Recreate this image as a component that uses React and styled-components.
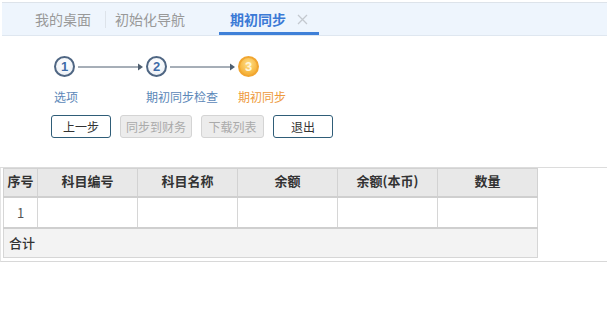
import React from 'react';
import styled, { createGlobalStyle } from 'styled-components';

const GlobalStyle = createGlobalStyle`
	body {
		margin: 0;
		background: #fff;
		font-family: 'Noto Sans CJK SC', 'Noto Sans', sans-serif;
		color: #333;
	}
`;

const tabs = [
	{ title: '我的桌面', pad: '0 15px 0 33px', sep: true },
	{ title: '初始化导航', pad: '0 34px 0 9px' },
	{ title: '期初同步', pad: '0 11px 0 11px', active: true },
];

const steps = [
	{ no: 1, label: '选项' },
	{ no: 2, label: '期初同步检查' },
	{ no: 3, label: '期初同步', current: true },
];

const buttons = [
	{ text: '上一步', width: 60 },
	{ text: '同步到财务', width: 72, disabled: true },
	{ text: '下载列表', width: 63, disabled: true },
	{ text: '退出', width: 60 },
];

const columns = [
	{ title: '序号', width: 34 },
	{ title: '科目编号', width: 100 },
	{ title: '科目名称', width: 100 },
	{ title: '余额', width: 100 },
	{ title: '余额(本币)', width: 100 },
	{ title: '数量', width: 100 },
];

const App = () => {
	return (
		<Page>
			<GlobalStyle />
			<TabBar>
				{tabs.map((tab) => (
					<Tab key={tab.title} pad={tab.pad} active={tab.active} sep={tab.sep}>
						<span>{tab.title}</span>
						{tab.active && (
							<svg width="11" height="11" viewBox="0 0 11 11">
								<path d="M1 1 L10 10 M10 1 L1 10" stroke="#c4c9cf" strokeWidth="1.3" />
							</svg>
						)}
					</Tab>
				))}
			</TabBar>

			<Wizard>
				<Steps>
					{steps.map((step, index) => (
						<Step key={step.no}>
							<StepHead>
								<Circle current={step.current}>{step.no}</Circle>
								{index !== steps.length - 1 && (
									<svg width="71" height="10" viewBox="0 0 71 10">
										<line x1="3" y1="5" x2="64" y2="5" stroke="#4f5f70" strokeWidth="1" />
										<path d="M63 1.5 L68 5 L63 8.5 Z" fill="#4f5f70" />
									</svg>
								)}
							</StepHead>
							<StepLabel current={step.current}>{step.label}</StepLabel>
						</Step>
					))}
				</Steps>
				<Actions>
					{buttons.map((btn) => (
						<Button key={btn.text} width={btn.width} disabled={btn.disabled}>
							{btn.text}
						</Button>
					))}
				</Actions>
			</Wizard>

			<GridArea>
				<Table>
					<colgroup>
						{columns.map((col) => (
							<col key={col.title} style={{ width: col.width }} />
						))}
					</colgroup>
					<thead>
						<tr>
							{columns.map((col) => (
								<Th key={col.title}>{col.title}</Th>
							))}
						</tr>
					</thead>
					<tbody>
						<tr>
							<Td center>1</Td>
							{columns.slice(1).map((col) => (
								<Td key={col.title} />
							))}
						</tr>
					</tbody>
					<tfoot>
						<tr>
							<TotalCell colSpan={columns.length}>合计</TotalCell>
						</tr>
					</tfoot>
				</Table>
			</GridArea>
		</Page>
	);
};

const Page = styled.div`
	width: 607px;
	height: 329px;
	overflow: hidden;
	padding-top: 2px;
	box-sizing: border-box;
`;

// 탭
const TabBar = styled.div`
	display: flex;
	align-items: stretch;
	height: 32px;
	margin-left: 2px;
	background: #eef5fd;
	border-top: 1px solid #dde3ea;
	border-bottom: 1px solid #dfe7f0;
`;

const Tab = styled.div`
	position: relative;
	display: flex;
	align-items: center;
	gap: 11px;
	padding: ${(p) => p.pad};
	font-size: 14px;
	color: ${(p) => (p.active ? '#3b7ad6' : '#999')};
	font-weight: ${(p) => (p.active ? 'bold' : 'normal')};

	${(p) =>
		p.sep &&
		`&::after {
			content: '';
			position: absolute;
			right: 0;
			top: 8px;
			height: 17px;
			border-right: 1px solid #dde3ea;
		}`}

	${(p) =>
		p.active &&
		`&::before {
			content: '';
			position: absolute;
			left: 0;
			right: 0;
			bottom: 0;
			height: 3px;
			background: #3f80d8;
		}`}
`;

// 단계
const Wizard = styled.div`
	padding: 20px 0 0 51px;
	height: 132px;
	box-sizing: border-box;
	border-bottom: 1px solid #dcdcdc;
`;

const Steps = styled.div`
	display: flex;
	padding-left: 3px;
`;

const Step = styled.div`
	width: 92px;
	display: flex;
	flex-direction: column;
`;

const StepHead = styled.div`
	display: flex;
	align-items: center;
	height: 21px;
`;

const Circle = styled.div`
	width: 21px;
	height: 21px;
	box-sizing: border-box;
	border-radius: 50%;
	display: flex;
	align-items: center;
	justify-content: center;
	font-family: 'Liberation Sans', Arial, sans-serif;
	font-size: 13px;
	font-weight: bold;
	border: 2px solid ${(p) => (p.current ? '#f1a631' : '#4f6683')};
	background: ${(p) =>
		p.current
			? 'radial-gradient(circle at 50% 35%, #ffe08a, #f6b43c 70%)'
			: 'radial-gradient(circle at 50% 35%, #ffffff, #e9eef4)'};
	color: ${(p) => (p.current ? '#fff6dc' : '#3f6ca8')};
`;

const StepLabel = styled.div`
	margin-top: 11px;
	font-size: 12px;
	line-height: 17px;
	color: ${(p) => (p.current ? '#ee9a3c' : '#5b87b8')};
`;

const Actions = styled.div`
	display: flex;
	gap: 9px;
	margin-top: 10px;
`;

const Button = styled.button`
	width: ${(p) => p.width}px;
	height: 23px;
	padding: 0;
	border-radius: 3px;
	font-family: inherit;
	font-size: 12px;
	background: ${(p) => (p.disabled ? '#ececec' : '#fff')};
	border: 1px solid ${(p) => (p.disabled ? '#d4d4d4' : '#2f5d78')};
	color: ${(p) => (p.disabled ? '#aaa' : '#333')};
`;

// 표
const GridArea = styled.div`
	height: 93px;
	padding-left: 2px;
	border-left: 1px solid #e4e4e4;
	border-bottom: 1px solid #d8d8d8;
`;

const Table = styled.table`
	border-collapse: collapse;
	table-layout: fixed;
	width: 534px;
	font-size: 13px;
`;

const Th = styled.th`
	height: 28px;
	padding: 0 0 3px;
	background: #e8e8e8;
	border: 1px solid #d2d2d2;
	border-bottom: 2px solid #cfcfcf;
	color: #333;
	font-weight: bold;
	text-align: center;
	vertical-align: middle;
	line-height: 16px;
	box-sizing: border-box;
`;

const Td = styled.td`
	height: 31px;
	padding: 0;
	border: 1px solid #d6d6d6;
	border-bottom: 2px solid #cfcfcf;
	text-align: ${(p) => (p.center ? 'center' : 'left')};
	color: #555;
	box-sizing: border-box;
`;

const TotalCell = styled.td`
	height: 30px;
	padding: 0 0 0 5px;
	background: #f3f3f3;
	border: 1px solid #d6d6d6;
	color: #333;
	font-weight: 500;
	box-sizing: border-box;
`;

export default App;
